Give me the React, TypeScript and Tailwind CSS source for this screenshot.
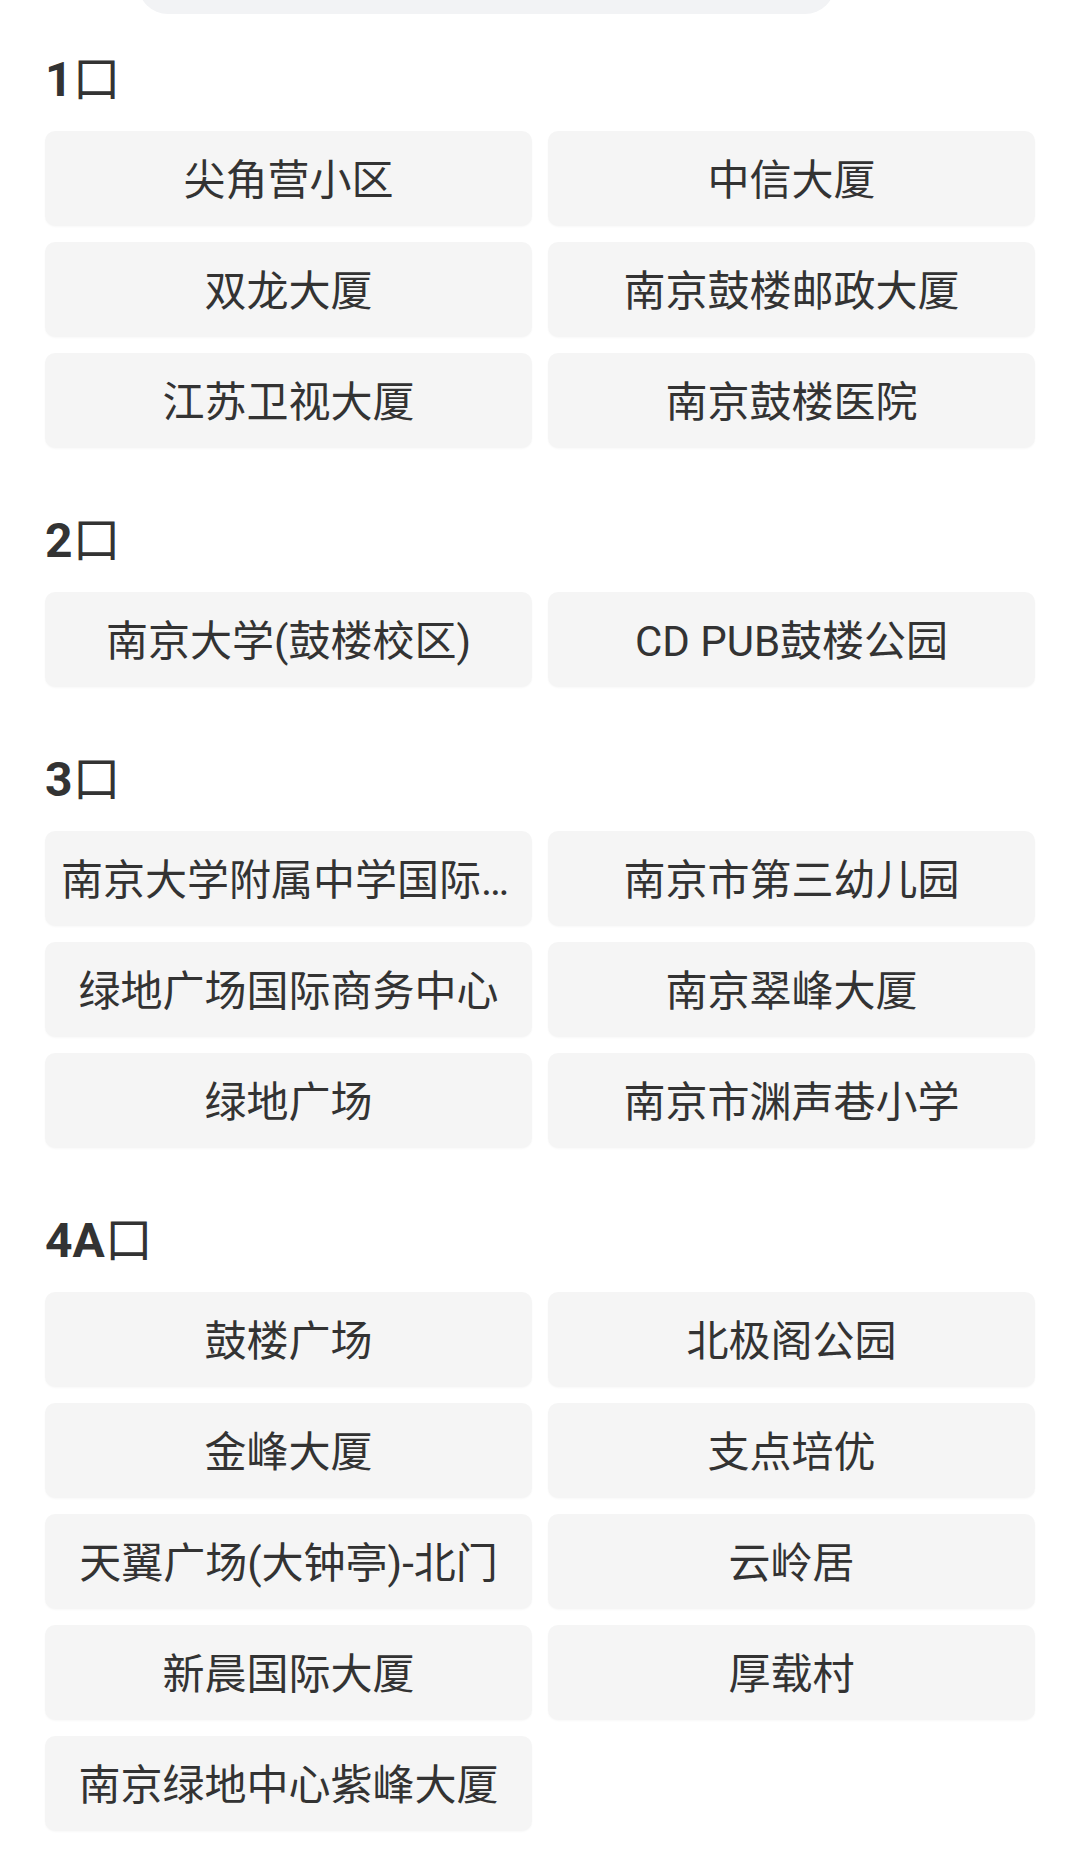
const sections: { title: string; places: string[] }[] = [
  {
    title: "1",
    places: ["尖角营小区", "中信大厦", "双龙大厦", "南京鼓楼邮政大厦", "江苏卫视大厦", "南京鼓楼医院"],
  },
  {
    title: "2",
    places: ["南京大学(鼓楼校区)", "CD PUB鼓楼公园"],
  },
  {
    title: "3",
    places: [
      "南京大学附属中学国际部",
      "南京市第三幼儿园",
      "绿地广场国际商务中心",
      "南京翠峰大厦",
      "绿地广场",
      "南京市渊声巷小学",
    ],
  },
  {
    title: "4A",
    places: [
      "鼓楼广场",
      "北极阁公园",
      "金峰大厦",
      "支点培优",
      "天翼广场(大钟亭)-北门",
      "云岭居",
      "新晨国际大厦",
      "厚载村",
      "南京绿地中心紫峰大厦",
    ],
  },
]

function ExitSection({ title, places }: { title: string; places: string[] }) {
  return (
    <section className="mt-[65px] first:mt-[38px]">
      <h2 className="h-[56px] text-[48px] leading-[56px] font-bold text-[#333]">
        {title}
        <span className="font-normal">口</span>
      </h2>
      <div className="mt-[23px] grid grid-cols-2 gap-4">
        {places.map((p) => (
          <div
            key={p}
            className="flex h-[95px] items-center justify-center rounded-[10px] bg-[#f5f5f5] px-4 pt-[4px] shadow-[0_1px_2px_rgba(0,0,0,0.03)]"
          >
            <span className="truncate text-[42px] leading-[56px] text-[#333]">{p}</span>
          </div>
        ))}
      </div>
    </section>
  )
}

export default function App() {
  return (
    <main className="min-h-screen bg-white font-['Roboto','Noto_Sans_CJK_SC',sans-serif]">
      {/* search bar bottom edge peeking in from above */}
      <div className="h-[14px] overflow-hidden">
        <div className="ml-[138px] -mt-[46px] h-[60px] w-[697px] rounded-[30px] bg-[#f2f3f5]" />
      </div>
      <div className="px-[45px]">
        {sections.map((s) => (
          <ExitSection key={s.title} title={s.title} places={s.places} />
        ))}
      </div>
    </main>
  )
}
